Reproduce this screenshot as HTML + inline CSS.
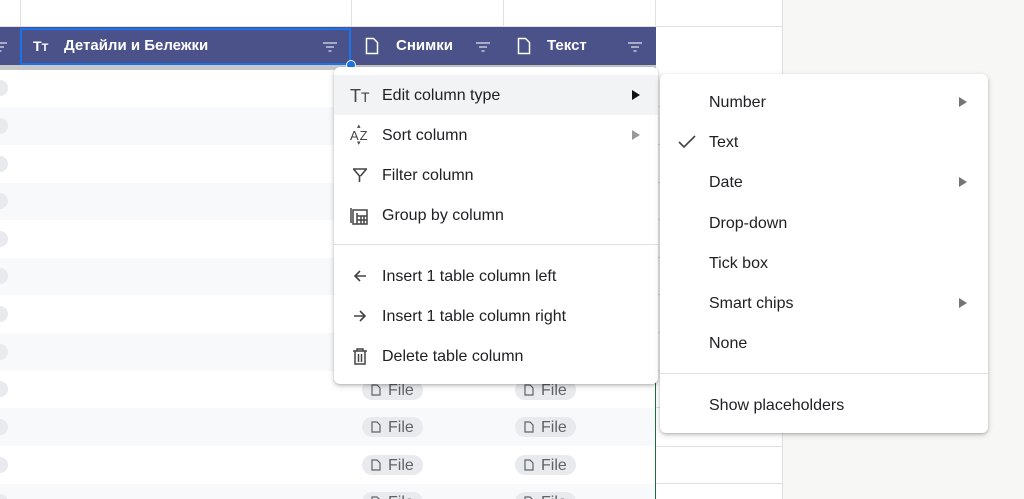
<!DOCTYPE html>
<html style="width:1024px;height:499px;overflow:hidden"><head><meta charset="utf-8"><style>
*{box-sizing:border-box;margin:0;padding:0}
body{width:1024px;height:499px;overflow:hidden;position:relative;background:#f7f7f6;font-family:"Liberation Sans",Arial,sans-serif;color:#202124}
.abs{position:absolute}
.row{position:absolute;left:0;width:655px;height:38px}
.chip{position:absolute;height:20px;width:61px;border-radius:10px;background:#e8eaed;color:#5f6368;font-size:16px;line-height:21px;padding-left:26px}
.chip svg{position:absolute;left:9px;top:4px}
.menu{position:absolute;background:#fff;border-radius:6px;box-shadow:0 2px 6px rgba(0,0,0,.2),0 1px 2px rgba(0,0,0,.15)}
.mi{position:absolute;left:0;right:0;height:40px;font-size:16px;line-height:42px;color:#202124}
.tri{position:absolute;width:0;height:0;border-top:5px solid transparent;border-bottom:5px solid transparent;border-left:8px solid #757575}
</style></head><body>
<div class="abs" style="left:0;top:0;width:782px;height:499px;background:#fff"></div>
<div class="abs" style="left:0;top:0;width:782px;height:27px;background:#fff;border-bottom:1px solid #e0e0e0"></div>
<div class="abs" style="left:20px;top:0;width:1px;height:27px;background:#e0e0e0"></div>
<div class="abs" style="left:351px;top:0;width:1px;height:27px;background:#e0e0e0"></div>
<div class="abs" style="left:503px;top:0;width:1px;height:27px;background:#e0e0e0"></div>
<div class="abs" style="left:655px;top:0;width:1px;height:27px;background:#e0e0e0"></div>
<div class="abs" style="left:782px;top:0;width:1px;height:499px;background:#e0e0e0"></div>
<div class="row" style="top:70px;background:#fff"></div>
<div class="row" style="top:107px;background:#f8f9fa"></div>
<div class="row" style="top:145px;background:#fff"></div>
<div class="row" style="top:183px;background:#f8f9fa"></div>
<div class="row" style="top:220px;background:#fff"></div>
<div class="row" style="top:258px;background:#f8f9fa"></div>
<div class="row" style="top:295px;background:#fff"></div>
<div class="row" style="top:333px;background:#f8f9fa"></div>
<div class="row" style="top:371px;background:#fff"></div>
<div class="row" style="top:408px;background:#f8f9fa"></div>
<div class="row" style="top:447px;background:#fff"></div>
<div class="row" style="top:484px;height:15px;background:#f8f9fa"></div>
<div class="abs" style="left:656px;top:106px;width:126px;height:1px;background:#e0e0e0"></div>
<div class="abs" style="left:656px;top:144px;width:126px;height:1px;background:#e0e0e0"></div>
<div class="abs" style="left:656px;top:182px;width:126px;height:1px;background:#e0e0e0"></div>
<div class="abs" style="left:656px;top:219px;width:126px;height:1px;background:#e0e0e0"></div>
<div class="abs" style="left:656px;top:257px;width:126px;height:1px;background:#e0e0e0"></div>
<div class="abs" style="left:656px;top:294px;width:126px;height:1px;background:#e0e0e0"></div>
<div class="abs" style="left:656px;top:332px;width:126px;height:1px;background:#e0e0e0"></div>
<div class="abs" style="left:656px;top:370px;width:126px;height:1px;background:#e0e0e0"></div>
<div class="abs" style="left:656px;top:407px;width:126px;height:1px;background:#e0e0e0"></div>
<div class="abs" style="left:656px;top:446px;width:126px;height:1px;background:#e0e0e0"></div>
<div class="abs" style="left:656px;top:483px;width:126px;height:1px;background:#e0e0e0"></div>
<div class="abs" style="left:655px;top:65px;width:1px;height:434px;background:#1e6b45"></div>
<div class="abs" style="left:-8px;top:80px;width:16px;height:16px;border-radius:50%;background:#e8eaed"></div>
<div class="abs" style="left:-8px;top:118px;width:16px;height:16px;border-radius:50%;background:#e8eaed"></div>
<div class="abs" style="left:-8px;top:156px;width:16px;height:16px;border-radius:50%;background:#e8eaed"></div>
<div class="abs" style="left:-8px;top:193px;width:16px;height:16px;border-radius:50%;background:#e8eaed"></div>
<div class="abs" style="left:-8px;top:231px;width:16px;height:16px;border-radius:50%;background:#e8eaed"></div>
<div class="abs" style="left:-8px;top:268px;width:16px;height:16px;border-radius:50%;background:#e8eaed"></div>
<div class="abs" style="left:-8px;top:306px;width:16px;height:16px;border-radius:50%;background:#e8eaed"></div>
<div class="abs" style="left:-8px;top:344px;width:16px;height:16px;border-radius:50%;background:#e8eaed"></div>
<div class="abs" style="left:-8px;top:381px;width:16px;height:16px;border-radius:50%;background:#e8eaed"></div>
<div class="abs" style="left:-8px;top:419px;width:16px;height:16px;border-radius:50%;background:#e8eaed"></div>
<div class="abs" style="left:-8px;top:457px;width:16px;height:16px;border-radius:50%;background:#e8eaed"></div>
<div class="abs" style="left:-8px;top:494px;width:16px;height:16px;border-radius:50%;background:#e8eaed"></div>
<div class="chip" style="left:362px;top:380px"><svg width="10" height="12" viewBox="0 0 10 12"><path d="M1 1h5l3 3v7H1z" fill="none" stroke="#5f6368" stroke-width="1.2"/></svg>File</div>
<div class="chip" style="left:515px;top:380px"><svg width="10" height="12" viewBox="0 0 10 12"><path d="M1 1h5l3 3v7H1z" fill="none" stroke="#5f6368" stroke-width="1.2"/></svg>File</div>
<div class="chip" style="left:362px;top:417px"><svg width="10" height="12" viewBox="0 0 10 12"><path d="M1 1h5l3 3v7H1z" fill="none" stroke="#5f6368" stroke-width="1.2"/></svg>File</div>
<div class="chip" style="left:515px;top:417px"><svg width="10" height="12" viewBox="0 0 10 12"><path d="M1 1h5l3 3v7H1z" fill="none" stroke="#5f6368" stroke-width="1.2"/></svg>File</div>
<div class="chip" style="left:362px;top:455px"><svg width="10" height="12" viewBox="0 0 10 12"><path d="M1 1h5l3 3v7H1z" fill="none" stroke="#5f6368" stroke-width="1.2"/></svg>File</div>
<div class="chip" style="left:515px;top:455px"><svg width="10" height="12" viewBox="0 0 10 12"><path d="M1 1h5l3 3v7H1z" fill="none" stroke="#5f6368" stroke-width="1.2"/></svg>File</div>
<div class="chip" style="left:362px;top:492px"><svg width="10" height="12" viewBox="0 0 10 12"><path d="M1 1h5l3 3v7H1z" fill="none" stroke="#5f6368" stroke-width="1.2"/></svg>File</div>
<div class="chip" style="left:515px;top:492px"><svg width="10" height="12" viewBox="0 0 10 12"><path d="M1 1h5l3 3v7H1z" fill="none" stroke="#5f6368" stroke-width="1.2"/></svg>File</div>
<div class="abs" style="left:0;top:27px;width:656px;height:38px;background:#4a5289"></div>
<div class="abs" style="left:0;top:65px;width:656px;height:5px;background:#c8c8c8"></div>
<div class="abs" style="left:20px;top:28px;width:331px;height:37px;border:2px solid #1a73e8"></div>
<div class="abs" style="left:346px;top:60px;width:10px;height:10px;border-radius:50%;background:#1a73e8;border:1px solid #fff"></div>
<div class="abs" style="left:0;top:27px;height:38px;line-height:38px;color:#fff;font-weight:bold;font-size:15px;width:656px">
 <span class="abs" style="left:33px;top:0;font-size:14px">T<span style="font-size:11px">T</span></span>
 <span class="abs" style="left:64px;top:0">Детайли и Бележки</span>
 <span class="abs" style="left:396px;top:0">Снимки</span>
 <span class="abs" style="left:547px;top:0">Текст</span>
</div>
<svg class="abs" style="left:-8px;top:41px" width="16" height="12"><path d="M1 2h14M4 6h8M6.5 10h3" stroke="#c5c8dc" stroke-width="1.5"/></svg>
<svg class="abs" style="left:322px;top:41px" width="16" height="12"><path d="M1 2h14M4 6h8M6.5 10h3" stroke="#c5c8dc" stroke-width="1.5"/></svg>
<svg class="abs" style="left:475px;top:41px" width="16" height="12"><path d="M1 2h14M4 6h8M6.5 10h3" stroke="#c5c8dc" stroke-width="1.5"/></svg>
<svg class="abs" style="left:627px;top:41px" width="16" height="12"><path d="M1 2h14M4 6h8M6.5 10h3" stroke="#c5c8dc" stroke-width="1.5"/></svg>
<svg class="abs" style="left:365px;top:37px" width="14" height="18"><path d="M1.5 1.5h7l4 4v11h-11z" fill="none" stroke="#fff" stroke-width="1.5"/></svg>
<svg class="abs" style="left:517px;top:37px" width="14" height="18"><path d="M1.5 1.5h7l4 4v11h-11z" fill="none" stroke="#fff" stroke-width="1.5"/></svg>
<div class="menu" style="left:334px;top:67px;width:324px;height:317px">
 <div class="abs" style="left:0;top:8px;width:324px;height:40px;background:#f1f3f4"></div>
 <div class="mi" style="top:8px"><span class="abs" style="left:16px;font-size:18px;color:#444">T<span style="font-size:14px">T</span></span><span class="abs" style="left:48px">Edit column type</span><div class="tri" style="left:298px;top:15px;border-left-color:#111"></div></div>
 <div class="mi" style="top:48px"><span class="abs" style="left:16px;font-size:13px;color:#444;letter-spacing:1px">AZ</span><span class="abs" style="left:23px;top:-9px;font-size:7px;color:#444">▴</span><span class="abs" style="left:23px;top:8px;font-size:7px;color:#444">▾</span><span class="abs" style="left:48px">Sort column</span><div class="tri" style="left:298px;top:15px;border-left-color:#999"></div></div>
 <div class="mi" style="top:88px"><svg class="abs" style="left:18px;top:12px" width="16" height="16"><path d="M1 2h14M1.5 2l6 7v6M14.5 2l-6 7" fill="none" stroke="#444" stroke-width="1.6"/></svg><span class="abs" style="left:48px">Filter column</span></div>
 <div class="mi" style="top:128px"><svg class="abs" style="left:15px;top:11px" width="20" height="20"><path d="M2 2v15M4 4h14v14H4z M8 10h10M8 14h10M8 7v11M12 10v8M15 10v8" fill="none" stroke="#444" stroke-width="1.5"/></svg><span class="abs" style="left:48px">Group by column</span></div>
 <div class="abs" style="left:0;top:177px;width:324px;height:1px;background:#e0e0e0"></div>
 <div class="mi" style="top:189px"><svg class="abs" style="left:19px;top:14px" width="14" height="12"><path d="M13 6H2M7 1L2 6l5 5" fill="none" stroke="#444" stroke-width="1.6"/></svg><span class="abs" style="left:48px">Insert 1 table column left</span></div>
 <div class="mi" style="top:229px"><svg class="abs" style="left:19px;top:14px" width="14" height="12"><path d="M1 6h11M7 1l5 5-5 5" fill="none" stroke="#444" stroke-width="1.6"/></svg><span class="abs" style="left:48px">Insert 1 table column right</span></div>
 <div class="mi" style="top:269px"><svg class="abs" style="left:18px;top:12px" width="16" height="17"><path d="M1 3h14M5 3V1h6v2M3 3v13h10V3M6.5 6v8M9.5 6v8" fill="none" stroke="#444" stroke-width="1.5"/></svg><span class="abs" style="left:48px">Delete table column</span></div>
</div>
<div class="menu" style="left:660px;top:74px;width:328px;height:359px">
 <div class="mi" style="top:8px"><span class="abs" style="left:49px">Number</span><div class="tri" style="left:299px;top:15px"></div></div>
 <div class="mi" style="top:48px"><svg class="abs" style="left:18px;top:13px" width="18" height="14"><path d="M1 7l5 5L17 1" fill="none" stroke="#444" stroke-width="1.6"/></svg><span class="abs" style="left:49px">Text</span></div>
 <div class="mi" style="top:88px"><span class="abs" style="left:49px">Date</span><div class="tri" style="left:299px;top:15px"></div></div>
 <div class="mi" style="top:129px"><span class="abs" style="left:49px">Drop-down</span></div>
 <div class="mi" style="top:169px"><span class="abs" style="left:49px">Tick box</span></div>
 <div class="mi" style="top:209px"><span class="abs" style="left:49px">Smart chips</span><div class="tri" style="left:299px;top:15px"></div></div>
 <div class="mi" style="top:249px"><span class="abs" style="left:49px">None</span></div>
 <div class="abs" style="left:0;top:299px;width:328px;height:1px;background:#e0e0e0"></div>
 <div class="mi" style="top:311px"><span class="abs" style="left:49px">Show placeholders</span></div>
</div>
</body></html>
